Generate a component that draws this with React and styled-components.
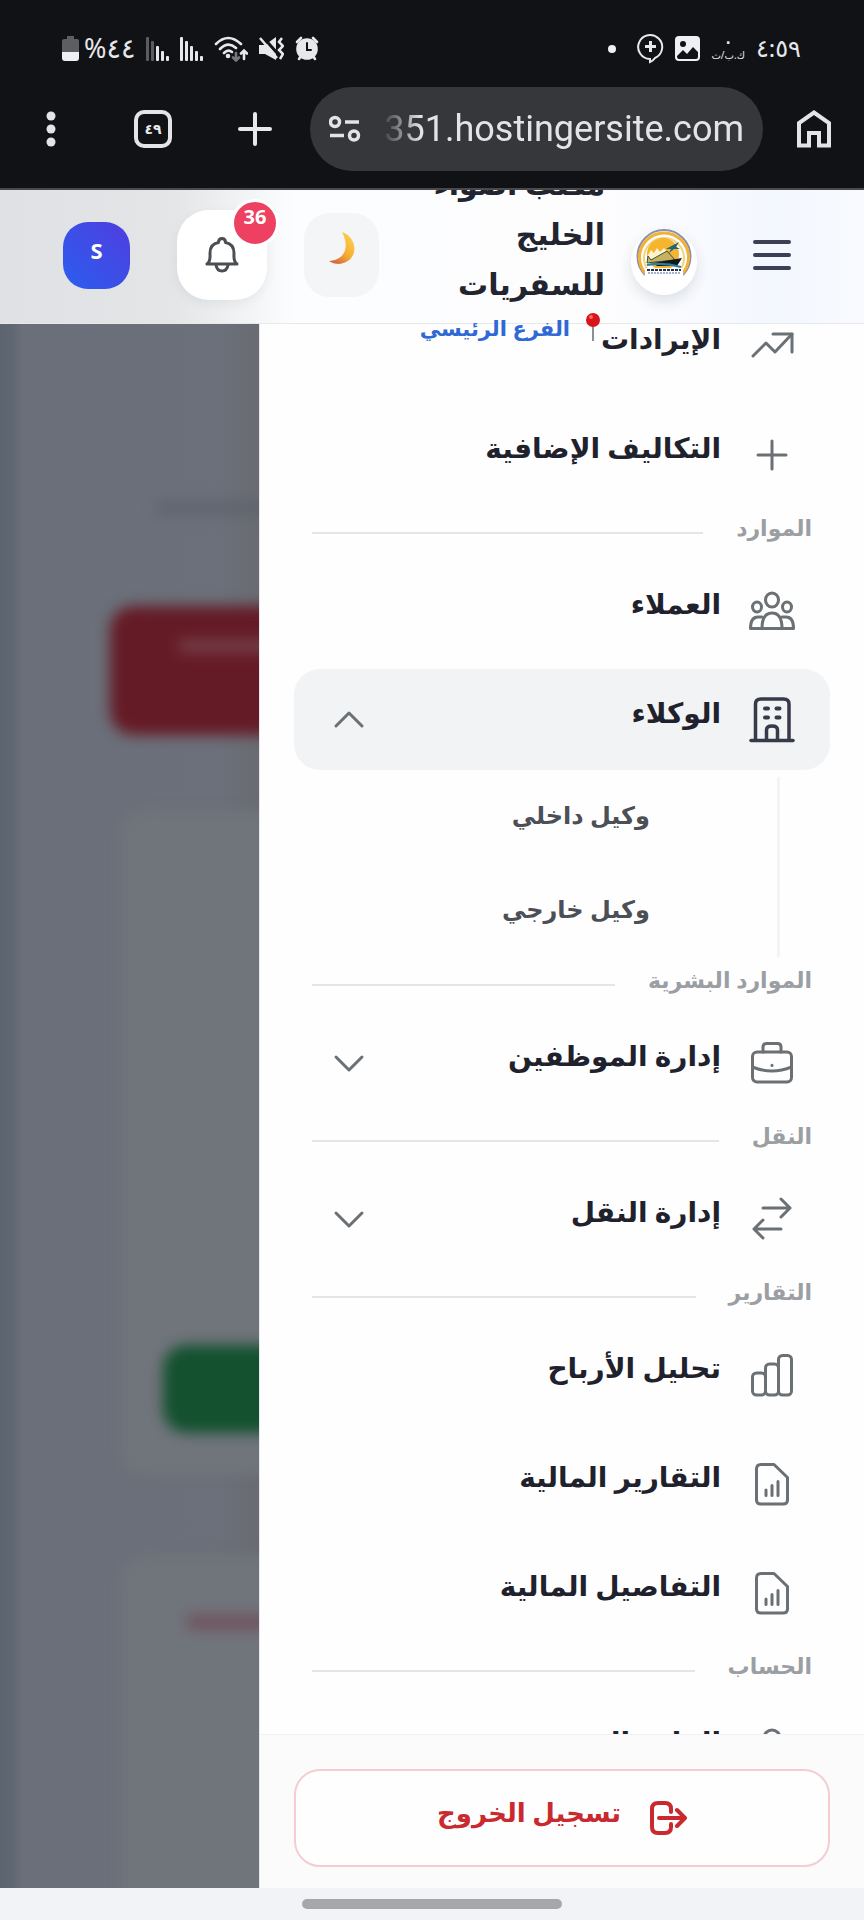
import React from "react";
import styled, { createGlobalStyle } from "styled-components";

const GlobalStyle = createGlobalStyle`
  *, *::before, *::after { box-sizing: border-box; }
  body { margin: 0; background: #111216; font-family: "Noto Sans", "DejaVu Sans", sans-serif; }
  button, input { font: inherit; border: 0; padding: 0; margin: 0; background: none; color: inherit; }
  a { color: inherit; text-decoration: none; }
  h1, h2, p, ul { margin: 0; padding: 0; font-size: inherit; }
  ul { list-style: none; }
  svg { display: block; flex: none; }
`;

const Screen = styled.div`
  display: flex;
  flex-direction: column;
  height: 100vh;
  overflow: hidden;
`;

/* Browser chrome */
const BrowserTop = styled.div`
  position: relative;
  z-index: 3;
  flex: none;
  background: #111216;
  border-bottom: 2px solid #4a4a4c;
  color: #e8e8ec;
`;
const StatusBar = styled.div`
  display: flex;
  justify-content: space-between;
  align-items: center;
  height: 87px;
  padding: 10px 63px 0 62px;
`;
const StatusGroup = styled.div`
  display: flex;
  align-items: center;
  gap: ${(p) => p.$gap}px;
`;
const StatusText = styled.span`
  padding-bottom: 2px;
  font-size: ${(p) => p.$size}px;
  line-height: 32px;
`;
const Rate = styled.span`
  display: flex;
  flex-direction: column;
  align-items: center;
  padding-bottom: 4px;
  font-size: 10px;
  line-height: 14px;
`;
const RateValue = styled.span`
  font-size: 22px;
  line-height: 16px;
`;
const Toolbar = styled.div`
  display: flex;
  align-items: center;
  height: 101px;
  padding: 0 26px 17px 27px;
`;
const ToolGroup = styled.div`
  display: flex;
  gap: 54px;
  margin-right: 31px;
`;
const ToolButton = styled.button`
  display: flex;
  align-items: center;
  justify-content: center;
  width: 48px;
  height: 48px;
`;
const TabCount = styled.span`
  display: flex;
  align-items: center;
  justify-content: center;
  width: 38px;
  height: 38px;
  border: 4px solid #e3e3e8;
  border-radius: 10px;
  font-size: 14px;
  font-weight: 700;
  line-height: 20px;
`;
const AddressPill = styled.label`
  display: flex;
  flex: 1;
  min-width: 0;
  align-items: center;
  gap: 20px;
  height: 84px;
  margin-right: 27px;
  padding: 0 19px;
  border-radius: 42px;
  background: #36373b;
`;
const Address = styled.input`
  flex: 1;
  min-width: 0;
  font-family: Roboto, sans-serif;
  font-size: 36px;
  line-height: 48px;
  color: #e3e3e8;
  text-align: right;
  mask-image: linear-gradient(90deg, transparent 0, #000 40px);
`;

/* Site header */
const SiteHeader = styled.header`
  position: relative;
  z-index: 2;
  display: flex;
  flex: none;
  align-items: center;
  height: 134px;
  padding: 0 62px 3px 63px;
  border-bottom: 1px solid #e7e8ea;
  background: linear-gradient(90deg, #dfe1e4 0, #e3e5e7 20%, #fcfdfe 34%, #fdfdfe 70%, #f3f7fe 90%, #f8fafe 100%);
`;
const MenuButton = styled.button`
  display: flex;
  align-items: center;
  justify-content: center;
  width: 60px;
  height: 60px;
`;
const Logo = styled.div`
  width: 66px;
  height: 66px;
  margin: 14px 45px 0 26px;
  border-radius: 50%;
  background: #fff;
  box-shadow: 0 6px 14px rgba(20, 30, 50, 0.12);
`;
const Titles = styled.div`
  flex: 1;
  min-width: 0;
  padding-bottom: 5px;
`;
const SiteTitle = styled.h1`
  font-size: 30px;
  font-weight: 700;
  line-height: 50px;
  color: #22252f;
`;
const TitleLine = styled.span`
  display: block;
  white-space: nowrap;
`;
const Branch = styled.p`
  display: flex;
  align-items: center;
  gap: 16px;
  padding-right: 5px;
  font-size: 21px;
  font-weight: 700;
  line-height: 38px;
  color: #2f69d6;
  white-space: nowrap;
`;
const ThemeButton = styled.button`
  display: flex;
  align-items: center;
  justify-content: center;
  width: 75px;
  height: 84px;
  padding-bottom: 14px;
  margin-right: 37px;
  border-radius: 26px;
  background: #f4f5f7;
`;
const BellButton = styled.button`
  position: relative;
  display: flex;
  align-items: center;
  justify-content: center;
  width: 90px;
  height: 90px;
  margin-right: 37px;
  border-radius: 32px;
  background: #fff;
  color: #4b4f53;
  box-shadow: 0 4px 12px rgba(20, 30, 50, 0.06);
`;
const Badge = styled.span`
  position: absolute;
  top: -11px;
  right: -12px;
  width: 48px;
  height: 48px;
  border: 3px solid #fff;
  border-radius: 50%;
  background: #ee4060;
  color: #fff;
  font-size: 20px;
  font-weight: 700;
  line-height: 30px;
`;
const Avatar = styled.button`
  width: 67px;
  height: 67px;
  padding-bottom: 10px;
  margin-right: 47px;
  border-radius: 25px;
  background: linear-gradient(45deg, #2b5eee, #4f3ddf);
  color: #fff;
  font-size: 22px;
  font-weight: 700;
`;

/* Body: dimmed page and drawer */
const Body = styled.div`
  display: flex;
  flex: 1;
  min-height: 0;
`;
const Dimmed = styled.div`
  flex: 1;
  min-width: 0;
  overflow: hidden;
  background: linear-gradient(90deg, #5c6470 0, #5f6772 12px, #6a6f79 22px, #6b707a 85%, #696b71 100%);
`;
const Haze = styled.div`
  display: flex;
  flex-direction: column;
  margin-right: -40px;
  filter: blur(7px);
`;
const HazeLine = styled.div`
  height: 12px;
  margin: 178px 0 92px 156px;
  border-radius: 6px;
  background: #5f636d;
`;
const HazeButton = styled.div`
  flex: none;
  height: ${(p) => p.$height}px;
  margin-left: ${(p) => p.$start}px;
  padding: 34px 0 0 68px;
  border-radius: 24px 0 0 24px;
  background: ${(p) => p.$color};
`;
const HazeLabel = styled.div`
  height: 12px;
  border-radius: 6px;
  background: ${(p) => p.$color};
`;
const HazeCard = styled.div`
  height: ${(p) => p.$height}px;
  margin: ${(p) => p.$top}px 0 0 120px;
  padding-top: ${(p) => p.$pad}px;
  border-radius: 24px 0 0 24px;
  background: #70747b;
`;
const HazeCaption = styled.div`
  height: 14px;
  margin-left: 66px;
  border-radius: 7px;
  background: #70515b;
`;

const Drawer = styled.aside`
  display: flex;
  flex-direction: column;
  width: 70%;
  border-left: 1px solid #e6e7ef;
  background: #fefefe;
`;
const Nav = styled.nav`
  flex: 1;
  min-height: 0;
  overflow: hidden;
  padding: 0 34px;
`;
const NavList = styled.ul`
  display: flex;
  flex-direction: column;
  margin-top: -29px;
`;
const NavItem = styled.li`
  & + & { margin-top: 8px; }
`;
const rowStyle = `
  display: flex;
  align-items: center;
  gap: 28px;
  width: 100%;
  height: 101px;
  padding: 0 35px 0 37px;
  border-radius: 26px;
`;
const RowLink = styled.a`
  ${rowStyle}
  color: #6b7074;
`;
const RowButton = styled.button`
  ${rowStyle}
  color: ${(p) => (p.$active ? "#373a49" : "#6b7074")};
  background: ${(p) => (p.$active ? "#f1f3f5" : "transparent")};
`;
const RowText = styled.span`
  flex: 1;
  padding-bottom: 16px;
  color: #1f222c;
  font-size: 28px;
  font-weight: 700;
  line-height: 40px;
  text-align: right;
  white-space: nowrap;
`;
const ChevronBox = styled.span`
  color: #6b7074;
`;
const Section = styled.li`
  display: flex;
  align-items: center;
  gap: 33px;
  height: 55px;
  padding: 0 18px;
  &::after { content: ""; flex: 1; height: 2px; background: #e3e5e7; }
`;
const SectionTitle = styled.h2`
  padding-bottom: 12px;
  color: #9b9ea3;
  font-size: 22px;
  font-weight: 700;
  line-height: 32px;
`;
const SubList = styled.ul`
  display: flex;
  flex-direction: column;
  gap: 8px;
  margin: 7px 50px 0 0;
  border-right: 3px solid #f3f4f6;
`;
const SubLink = styled.a`
  display: block;
  height: 86px;
  padding-right: 127px;
  color: #4c5056;
  font-size: 24px;
  font-weight: 700;
  line-height: 76px;
`;
const DrawerFooter = styled.div`
  flex: none;
  padding: 34px 34px 21px;
  border-top: 1px solid #f1f2f3;
  background: #fbfbfb;
`;
const LogoutButton = styled.button`
  display: flex;
  align-items: center;
  justify-content: center;
  gap: 28px;
  width: 100%;
  height: 98px;
  border: 2px solid #f5ccd2;
  border-radius: 26px;
  background: #fefefe;
  color: #c92a2f;
`;
const LogoutText = styled.span`
  padding-bottom: 12px;
  font-size: 26px;
  font-weight: 700;
  line-height: 40px;
`;
const SystemBar = styled.div`
  display: flex;
  flex: none;
  align-items: center;
  justify-content: center;
  height: 32px;
  background: #f2f3f6;
`;
const HomeHandle = styled.div`
  width: 30%;
  height: 10px;
  border-radius: 5px;
  background: #a5a7aa;
`;

/* Icons */
const Icon = ({ size = 46, w = 3, children }) => (
  <svg width={size} height={size} viewBox={`0 0 ${size} ${size}`} fill="none" stroke="currentColor"
    strokeWidth={w} strokeLinecap="round" strokeLinejoin="round" aria-hidden="true">{children}</svg>
);
const icons = {
  trend: <Icon><path d="M4 33L17 20L26 29L43 11" /><path d="M24 11H43V29" /></Icon>,
  plus: <Icon><path d="M23 9V37M9 23H37" /></Icon>,
  users: (
    <Icon>
      <ellipse cx="23" cy="12" rx="6.500" ry="7" /><ellipse cx="8" cy="19" rx="4.500" ry="5" /><ellipse cx="38" cy="19" rx="4.500" ry="5" />
      <path d="M13 40.500C13 30 16 25 23 25S33 30 33 40.500" />
      <path d="M13 29H9C4 29 1.500 33 1.500 40.500H44.500C44.500 33 42 29 37 29H33" />
    </Icon>
  ),
  building: (
    <Icon w={3.5}>
      <path d="M2 43.500H44" /><path d="M6.500 43V7Q6.500 2 12 2H34.500Q40 2 40 7V43" />
      <path d="M17.500 43V33Q17.500 29 23 29T28.500 33V43" />
      <path d="M16 11.500H19M27.500 11.500H30.500M16 20.500H19M27.500 20.500H30.500" strokeWidth="4" />
    </Icon>
  ),
  briefcase: (
    <Icon>
      <rect x="3.500" y="12" width="39" height="30" rx="4.500" />
      <path d="M14 12V7Q14 3.500 17.500 3.500H28.500Q32 3.500 32 7V12" />
      <path d="M3.500 27Q23 35 42.500 27" /><path d="M23 25.300V25.500" />
    </Icon>
  ),
  transfer: <Icon><path d="M14 12H41M32 3L41 12L32 21M32 33H5M14 24L5 33L14 42" /></Icon>,
  bars: (
    <Icon>
      <rect x="3.500" y="21" width="13" height="22" rx="4" /><rect x="16.500" y="12" width="13" height="31" rx="4" />
      <rect x="29.500" y="3.500" width="13" height="39.500" rx="4" />
    </Icon>
  ),
  report: (
    <Icon>
      <path d="M7.500 8Q7.500 3.500 12 3.500H25L38.500 16.500V39Q38.500 43 34 43H12Q7.500 43 7.500 39Z" />
      <path d="M17 29V34.500M23 24.500V34.500M29 20.500V34.500" />
    </Icon>
  ),
  user: <Icon><circle cx="23" cy="12" r="8" /><path d="M6 42Q8 26 23 26T40 42Z" /></Icon>,
};
const Chevron = ({ up }) => (
  <ChevronBox>
    <Icon size={36}><path d={up ? "M5 24L18 11L31 24" : "M5 12L18 25L31 12"} /></Icon>
  </ChevronBox>
);

const Battery = () => (
  <svg width="17" height="25" viewBox="0 0 17 25" aria-hidden="true">
    <path d="M5 0H12V3H15Q17 3 17 5V16H0V5Q0 3 2 3H5Z" fill="#5d5e61" />
    <path d="M0 16H17V22Q17 25 14 25H3Q0 25 0 22Z" fill="#f0f0f3" />
  </svg>
);
const Signal = ({ dim }) => (
  <svg width="23" height="24" viewBox="0 0 23 24" fill="#e8e8ec" aria-hidden="true">
    <rect width="3" height="24" rx="1" opacity={dim ? 0.35 : 1} />
    <rect x="5" y="4" width="3" height="20" rx="1" opacity={dim ? 0.35 : 1} />
    <rect x="10" y="9" width="3" height="15" rx="1" /><rect x="15" y="14" width="3" height="10" rx="1" />
    <rect x="20" y="19" width="3" height="5" rx="1" />
  </svg>
);
const Wifi = () => (
  <svg width="34" height="26" viewBox="0 0 34 26" fill="none" stroke="#e8e8ec" strokeWidth="2.600" strokeLinecap="round" aria-hidden="true">
    <path d="M2 8Q14 -4 27 8M6 13Q14 5 22 12M10 17Q14 13 18 16" />
    <circle cx="14" cy="20" r="1" fill="#e8e8ec" />
    <path d="M22 17V24M19 21.500L22 24.500L25 21.500" stroke="#77787b" /><path d="M30 23V15M27 17.500L30 14.500L33 17.500" />
  </svg>
);
const Mute = () => (
  <svg width="25" height="24" viewBox="0 0 25 24" aria-hidden="true">
    <path d="M0 8H6L17 0V23L6 17H0Z" fill="#e8e8ec" />
    <path d="M3 -1L19 17" stroke="#111216" strokeWidth="3" /><path d="M1 1L18 21" stroke="#e8e8ec" strokeWidth="2.500" />
    <path d="M23 1L20 5L24 9L20 13L24 17L21 22" fill="none" stroke="#e8e8ec" strokeWidth="2.500" />
  </svg>
);
const Alarm = () => (
  <svg width="24" height="25" viewBox="0 0 24 25" fill="none" stroke="#e8e8ec" strokeWidth="2.600" strokeLinecap="round" aria-hidden="true">
    <circle cx="12" cy="13" r="9.500" fill="#e8e8ec" /><path d="M2 6L6 2M22 6L18 2M4 23L6 20M20 23L18 20" />
    <path d="M12 7V14H16" stroke="#111216" strokeWidth="2" />
  </svg>
);
const PlusBubble = () => (
  <svg width="27" height="31" viewBox="0 0 27 31" fill="none" stroke="#e8e8ec" strokeWidth="2" aria-hidden="true">
    <path d="M13 29V26A12 12 0 1 1 18 25Q16 28 13 29Z" /><path d="M13.500 8V19M8 13.500H19" strokeWidth="3" />
  </svg>
);
const Picture = () => (
  <svg width="25" height="25" viewBox="0 0 25 25" aria-hidden="true">
    <rect width="25" height="25" rx="4" fill="#f0f0f3" /><circle cx="8" cy="8" r="3" fill="#111216" />
    <path d="M2 20L8 14L12 18L18 11L23 16V21Q23 23 21 23H4Q2 23 2 20Z" fill="#111216" />
  </svg>
);
const Tune = () => (
  <svg width="32" height="28" viewBox="0 0 32 28" fill="none" stroke="#e3e3e8" strokeWidth="3.500" aria-hidden="true">
    <circle cx="6" cy="7" r="4.500" /><path d="M16 7H30M1 20.500H15" /><circle cx="25" cy="20.500" r="4.500" />
  </svg>
);
const LogoArt = () => (
  <svg width="66" height="66" viewBox="0 0 66 66" fill="none" aria-hidden="true">
    <path d="M14 46A26.500 26.500 0 1 1 52 46" stroke="#8d91a6" strokeWidth="2" />
    <path d="M15 45A24.500 24.500 0 1 1 51 45" stroke="#f2b23a" strokeWidth="3" />
    <path d="M17 41A20 20 0 1 1 49 41" stroke="#f7d27c" strokeWidth="2" />
    <circle cx="32" cy="25" r="16" fill="#f4b52f" />
    <path d="M17 26L20 21L23 24L26 19L29 23L33 19L42 30H17Z" fill="#fff3cf" />
    <path d="M35 20L48 13L45 18L49 20L43 20L38 24L40 20Z" fill="#1f6480" />
    <path d="M16 34L17 27L20 31L36 22L44 31L24 33Z" fill="#c9b25e" stroke="#35533f" />
    <path d="M22 34L51 29L46 37H26Z" fill="#16181c" />
    <path d="M16 36Q32 33 50 38" stroke="#2a7fa0" strokeWidth="2" />
    <path d="M14 39H52V47H14Z" fill="#fff" />
    <path d="M16 41H50" stroke="#26324f" strokeWidth="2" strokeDasharray="3 1" />
    <path d="M17 44H49" stroke="#4b67a0" strokeDasharray="2 1" />
  </svg>
);
const Moon = () => (
  <svg width="30" height="34" viewBox="0 0 30 34" aria-hidden="true">
    <defs><linearGradient id="moon" x1="1" y1="0" x2="0.300" y2="1"><stop offset="0" stopColor="#fbd75a" /><stop offset="0.600" stopColor="#f6b030" /><stop offset="1" stopColor="#d9683f" /></linearGradient></defs>
    <path d="M15 1C32 7 32 31 12 33Q6 33 2 30C18 29 23 16 15 1Z" fill="url(#moon)" />
  </svg>
);
const Pin = () => (
  <svg width="14" height="30" viewBox="0 0 14 30" aria-hidden="true">
    <path d="M7 13V28" stroke="#8b9096" strokeWidth="2" /><circle cx="7" cy="7" r="7" fill="#d8151b" />
    <circle cx="5" cy="4" r="2" fill="#f26c68" />
  </svg>
);
const Bell = () => (
  <Icon size={38}>
    <path d="M4 28H34C30 25 31 21 31 17Q31 8 22.500 6.500Q22.500 2.500 19 2.500T15.500 6.500Q7 8 7 17C7 21 8 25 4 28Z" />
    <path d="M13 29Q14 35 19 35T25 29" />
  </Icon>
);

const Item = ({ icon, label }) => (
  <NavItem><RowLink href="#">{icons[icon]}<RowText>{label}</RowText></RowLink></NavItem>
);
const Group = ({ icon, label, open, children }) => (
  <NavItem>
    <RowButton type="button" $active={open} aria-expanded={!!open}>
      {icons[icon]}<RowText>{label}</RowText>
      <Chevron up={open} />
    </RowButton>
    {children}
  </NavItem>
);
const Divider = ({ label }) => <Section><SectionTitle>{label}</SectionTitle></Section>;

export default function App() {
  return (
    <Screen>
      <GlobalStyle />
      <BrowserTop>
        <StatusBar>
          <StatusGroup $gap={11}>
            <StatusGroup $gap={5}><Battery /><StatusText $size={27}>%٤٤</StatusText></StatusGroup>
            <Signal dim /><Signal /><Wifi /><Mute /><Alarm />
          </StatusGroup>
          <StatusGroup $gap={11}>
            <svg width="26" height="8" viewBox="0 0 26 8" aria-hidden="true"><circle cx="12" cy="4" r="4" fill="#f0f0f3" /></svg>
            <PlusBubble /><Picture />
            <Rate dir="rtl"><RateValue>٠</RateValue><span>ك.ب/ث</span></Rate>
            <StatusText $size={24}>٤:٥٩</StatusText>
          </StatusGroup>
        </StatusBar>
        <Toolbar>
          <ToolGroup>
            <ToolButton type="button" aria-label="القائمة">
              <svg width="10" height="36" viewBox="0 0 10 36" fill="#e3e3e8"><circle cx="5" cy="5" r="4.500" /><circle cx="5" cy="18" r="4.500" /><circle cx="5" cy="31" r="4.500" /></svg>
            </ToolButton>
            <ToolButton type="button"><TabCount>٤٩</TabCount></ToolButton>
            <ToolButton type="button" aria-label="علامة تبويب جديدة">
              <Icon size={36} w={4}><path d="M18 3V33M3 18H33" /></Icon>
            </ToolButton>
          </ToolGroup>
          <AddressPill>
            <Tune />
            <Address type="text" readOnly value="351.hostingersite.com" aria-label="العنوان" />
          </AddressPill>
          <ToolButton type="button" aria-label="الصفحة الرئيسية">
            <svg width="36" height="40" viewBox="0 0 36 40" fill="none" stroke="#e3e3e8" strokeWidth="4">
              <path d="M3 36.500V14L18 3.500L33 14V36.500H23V24H13V36.500Z" />
            </svg>
          </ToolButton>
        </Toolbar>
      </BrowserTop>

      <SiteHeader dir="rtl">
        <MenuButton type="button" aria-label="القائمة الجانبية">
          <svg width="38" height="30" viewBox="0 0 38 30" fill="none" stroke="#3c4052" strokeWidth="4" strokeLinecap="round"><path d="M2 2H36M2 15H36M2 28H36" /></svg>
        </MenuButton>
        <Logo><LogoArt /></Logo>
        <Titles>
          <SiteTitle>
            <TitleLine>مكتب اضواء</TitleLine>
            <TitleLine>الخليج</TitleLine>
            <TitleLine>للسفريات</TitleLine>
          </SiteTitle>
          <Branch><Pin />الفرع الرئيسي</Branch>
        </Titles>
        <ThemeButton type="button" aria-label="الوضع الليلي"><Moon /></ThemeButton>
        <BellButton type="button" aria-label="الإشعارات"><Bell /><Badge>36</Badge></BellButton>
        <Avatar type="button">S</Avatar>
      </SiteHeader>

      <Body>
        <Dimmed aria-hidden="true">
          <Haze>
            <HazeLine />
            <HazeButton $height={129} $start={110} $color="#651b26"><HazeLabel $color="#75424b" /></HazeButton>
            <HazeCard $height={665} $top={75} $pad={535}><HazeButton $height={88} $start={43} $color="#13512f" /></HazeCard>
            <HazeCard $height={360} $top={80} $pad={60}><HazeCaption /></HazeCard>
          </Haze>
        </Dimmed>
        <Drawer dir="rtl">
          <Nav>
            <NavList>
              <Item icon="trend" label="الإيرادات" />
              <Item icon="plus" label="التكاليف الإضافية" />
              <Divider label="الموارد" />
              <Item icon="users" label="العملاء" />
              <Group icon="building" label="الوكلاء" open>
                <SubList>
                  <li><SubLink href="#">وكيل داخلي</SubLink></li>
                  <li><SubLink href="#">وكيل خارجي</SubLink></li>
                </SubList>
              </Group>
              <Divider label="الموارد البشرية" />
              <Group icon="briefcase" label="إدارة الموظفين" />
              <Divider label="النقل" />
              <Group icon="transfer" label="إدارة النقل" />
              <Divider label="التقارير" />
              <Item icon="bars" label="تحليل الأرباح" />
              <Item icon="report" label="التقارير المالية" />
              <Item icon="report" label="التفاصيل المالية" />
              <Divider label="الحساب" />
              <Item icon="user" label="الملف الشخصي" />
            </NavList>
          </Nav>
          <DrawerFooter>
            <LogoutButton type="button">
              <Icon size={38} w={4}>
                <path d="M22 13V10Q22 4 16 4H9Q3 4 3 10V28Q3 34 9 34H16Q22 34 22 28V25" />
                <path d="M10 19H36M28 11L36 19L28 27" />
              </Icon>
              <LogoutText>تسجيل الخروج</LogoutText>
            </LogoutButton>
          </DrawerFooter>
        </Drawer>
      </Body>
      <SystemBar><HomeHandle /></SystemBar>
    </Screen>
  );
}
